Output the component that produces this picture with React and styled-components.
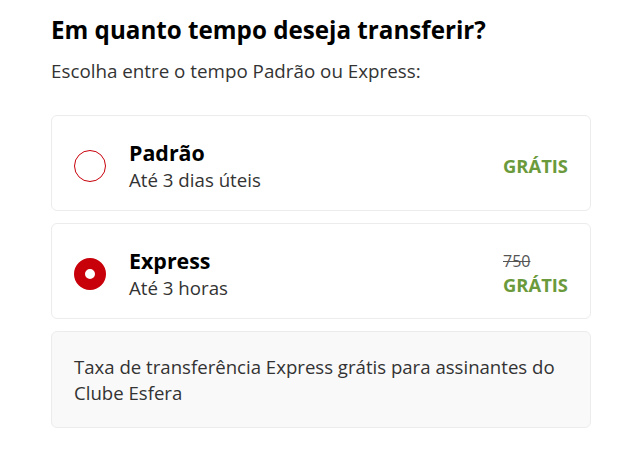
import React, { useState } from 'react';
import styled, { createGlobalStyle } from 'styled-components';

const GlobalStyle = createGlobalStyle`
  body {
    margin: 0;
    background: #fff;
    font-family: "Open Sans", "Liberation Sans", sans-serif;
  }
`

const Main = styled.main`
  width: 540px;
  padding: 13px 0 0 51px;
  display: flex;
  flex-direction: column;
`

const Title = styled.h2`
  margin: 0;
  font-size: 24.2px;
  line-height: 34px;
  font-weight: 700;
  color: #000;
`

const Subtitle = styled.p`
  margin: 10px 0 0;
  font-size: 18.8px;
  line-height: 28px;
  color: #333;
`

const List = styled.div`
  margin-top: 30px;
  display: flex;
  flex-direction: column;
  gap: 12px;
`

const Card = styled.label`
  box-sizing: border-box;
  height: 96px;
  display: flex;
  align-items: center;
  padding: 0 22px;
  border: 1px solid #ececec;
  border-radius: 6px;
  background: #fff;
  cursor: pointer;
`

const Radio = styled.span`
  box-sizing: border-box;
  width: 32px;
  height: 32px;
  margin-top: 6px;
  border-radius: 50%;
  flex-shrink: 0;
  background: #fff;
  border: ${p => (p.checked ? '11px solid #c8000a' : '1px solid #c8000a')};
`

const Info = styled.div`
  margin-left: 23px;
  flex: 1;
  display: flex;
  flex-direction: column;
  padding-top: 5px;
`

const Name = styled.span`
  font-size: 21.4px;
  line-height: 27px;
  font-weight: 700;
  color: #000;
`

const Time = styled.span`
  font-size: 18.7px;
  line-height: 27px;
  color: #333;
`

const Price = styled.div`
  display: flex;
  flex-direction: column;
  align-items: flex-start;
  padding-top: 5px;
`

const OldPrice = styled.span`
  font-size: 16px;
  line-height: 22px;
  color: #555;
  text-decoration: line-through;
`

const Free = styled.span`
  font-size: 18.4px;
  line-height: 26px;
  font-weight: 700;
  color: #6b9a3c;
`

const Note = styled.div`
  box-sizing: border-box;
  height: 97px;
  padding: 22px 22px 0;
  border: 1px solid #ececec;
  border-radius: 6px;
  background: #f9f9f9;
  font-size: 18.6px;
  line-height: 26px;
  color: #333;
`

const options = [
  { id: 'padrao', name: 'Padrão', time: 'Até 3 dias úteis' },
  { id: 'express', name: 'Express', time: 'Até 3 horas', old: '750' },
]

export default function App() {
  const [selected, setSelected] = useState('express');

  return (
    <Main>
      <GlobalStyle />
      <Title>Em quanto tempo deseja transferir?</Title>
      <Subtitle>Escolha entre o tempo Padrão ou Express:</Subtitle>
      <List>
        {options.map(opt => (
          <Card key={opt.id} onClick={() => setSelected(opt.id)}>
            <Radio checked={selected === opt.id} />
            <Info>
              <Name>{opt.name}</Name>
              <Time>{opt.time}</Time>
            </Info>
            <Price>
              {opt.old && <OldPrice>{opt.old}</OldPrice>}
              <Free>GRÁTIS</Free>
            </Price>
          </Card>
        ))}
        <Note>
          Taxa de transferência Express grátis para assinantes do Clube Esfera
        </Note>
      </List>
    </Main>
  );
}
